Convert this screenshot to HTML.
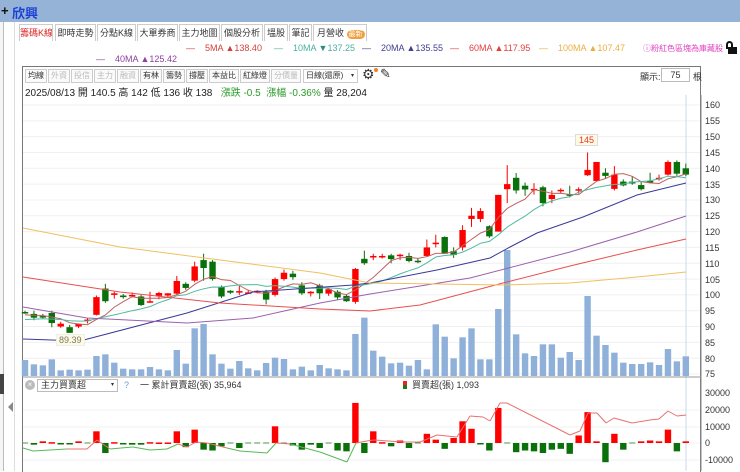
<!DOCTYPE html>
<html><head><meta charset="utf-8">
<style>
*{margin:0;padding:0;box-sizing:border-box}
body{width:740px;height:471px;overflow:hidden;background:#fff;font-family:"Liberation Sans","Noto Sans CJK TC",sans-serif;position:relative;font-size:11px;color:#333}
.a{position:absolute;white-space:nowrap}
.title{left:0;top:0;width:740px;height:22px;background:#95b3d7}
.tab{position:absolute;top:24px;height:17px;border:1px solid #ccc;border-bottom:none;font-size:9px;line-height:16px;text-align:center;color:#333;background:#fff;white-space:nowrap;overflow:hidden}
.tb{position:absolute;top:69px;height:14px;border:1px solid #ccc;font-size:8px;line-height:12px;padding:0 2px;color:#333;background:#fafafa;white-space:nowrap;overflow:hidden}
.g{color:#bbb}
.ax{position:absolute;left:705px;font-size:9px;color:#333}
</style></head><body>
<div class="a title"></div>
<div class="a" style="left:1px;top:3px;font-size:13px;font-weight:bold;color:#111">+</div>
<div class="a" style="left:12px;top:3px;font-size:13px;color:#1b3fd6;font-weight:bold">欣興</div>
<div class="a" style="left:0;top:22px;width:4px;height:449px;border-right:1px solid #bbb;background:#f5f5f5"></div>
<div class="a" style="left:0;top:374px;width:4px;height:20px;background:#444"></div>
<div class="a" style="left:14px;top:22px;width:1px;height:449px;background:#ddd"></div>
<div class="a" style="left:8px;top:402px;width:0;height:0;border-top:5px solid transparent;border-bottom:5px solid transparent;border-right:5px solid #888"></div>
<div class="tab" style="left:19px;width:34px;color:#d22">籌碼K線</div>
<div class="tab" style="left:55px;width:41px">即時走勢</div>
<div class="tab" style="left:97px;width:39px">分點K線</div>
<div class="tab" style="left:137px;width:41px">大單券商</div>
<div class="tab" style="left:179px;width:41px">主力地圖</div>
<div class="tab" style="left:221px;width:42px">個股分析</div>
<div class="tab" style="left:264px;width:24px">塭股</div>
<div class="tab" style="left:289px;width:23px">筆記</div>
<div class="tab" style="left:313px;width:54px;text-align:left;padding-left:3px">月營收 <span style="background:#f0a040;color:#fff;border-radius:6px;font-size:7px;padding:0 2px;line-height:9px;display:inline-block">最新</span></div>
<div class="a" style="left:186px;top:43px;font-size:9px;color:#d04040">—&nbsp;&nbsp;&nbsp; 5MA ▲138.40</div>
<div class="a" style="left:274px;top:43px;font-size:9px;color:#4bb0a0">—&nbsp;&nbsp;&nbsp; 10MA <span style="color:#2a8a80">▼</span>137.25</div>
<div class="a" style="left:362px;top:43px;font-size:9px;color:#404090">—&nbsp;&nbsp;&nbsp; 20MA ▲135.55</div>
<div class="a" style="left:450px;top:43px;font-size:9px;color:#e04040">—&nbsp;&nbsp;&nbsp; 60MA ▲117.95</div>
<div class="a" style="left:539px;top:43px;font-size:9px;color:#e8b040">—&nbsp;&nbsp;&nbsp; 100MA ▲107.47</div>
<div class="a" style="left:643px;top:43px;font-size:8px;color:#e040c0">ⓘ粉紅色區塊為庫藏股</div>
<div class="a" style="left:728px;top:47px;width:9px;height:7px;background:#111"></div>
<div class="a" style="left:726px;top:41px;width:7px;height:8px;border:2px solid #111;border-bottom:none;border-radius:4px 4px 0 0"></div>
<div class="a" style="left:96px;top:54px;font-size:9px;color:#9040a0">—&nbsp;&nbsp;&nbsp; 40MA ▲125.42</div>
<div class="a" style="left:22px;top:66px;width:679px;height:406px;border:1px solid #777;border-bottom:none"></div>
<div class="tb" style="left:25px">均線</div>
<div class="tb g" style="left:48px">外資</div>
<div class="tb g" style="left:71px">投信</div>
<div class="tb g" style="left:94px">主力</div>
<div class="tb g" style="left:117px">融資</div>
<div class="tb" style="left:140px">有林</div>
<div class="tb" style="left:163px">籌勢</div>
<div class="tb" style="left:186px">撐壓</div>
<div class="tb" style="left:209px">本益比</div>
<div class="tb" style="left:240px">紅綠燈</div>
<div class="tb g" style="left:271px">分價量</div>
<div class="tb" style="left:303px;width:55px;background:#fff">日線(還原) <span style="font-size:6px;position:absolute;right:3px">▾</span></div>
<div class="a" style="left:362px;top:66px;font-size:14px;color:#333">⚙</div>
<div class="a" style="left:374px;top:68px;width:4px;height:4px;border-radius:2px;background:#f08020"></div>
<div class="a" style="left:380px;top:66px;font-size:13px;color:#333">✎</div>
<div class="a" style="left:640px;top:70px;font-size:9px">顯示:</div>
<div class="a" style="left:661px;top:68px;width:29px;height:14px;border:1px solid #bbb;font-size:9px;line-height:12px;text-align:center">75</div>
<div class="a" style="left:693px;top:70px;font-size:9px">根</div>
<div class="a" style="left:25px;top:84px;font-size:10px;color:#222">2025/08/13 開 140.5 高 142 低 136 收 138 &nbsp; <span style="color:#2a9a2a">漲跌 -0.5 &nbsp;漲幅 -0.36%</span> 量 28,204</div>
<div class="ax" style="top:100px">160</div><div class="ax" style="top:116px">155</div><div class="ax" style="top:132px">150</div><div class="ax" style="top:148px">145</div><div class="ax" style="top:164px">140</div><div class="ax" style="top:180px">135</div><div class="ax" style="top:195px">130</div><div class="ax" style="top:211px">125</div><div class="ax" style="top:227px">120</div><div class="ax" style="top:243px">115</div><div class="ax" style="top:259px">110</div><div class="ax" style="top:275px">105</div><div class="ax" style="top:290px">100</div><div class="ax" style="top:306px">95</div><div class="ax" style="top:322px">90</div><div class="ax" style="top:338px">85</div><div class="ax" style="top:354px">80</div><div class="ax" style="top:369px">75</div>
<div class="ax" style="top:388px">30000</div><div class="ax" style="top:405px">20000</div><div class="ax" style="top:422px">10000</div><div class="ax" style="top:438px">0</div><div class="ax" style="top:455px">-10000</div>
<div class="a" style="left:25px;top:380px;width:10px;height:10px;border-radius:5px;background:#bbb;color:#fff;font-size:8px;line-height:10px;text-align:center">×</div>
<div class="a" style="left:37px;top:379px;width:81px;height:13px;border:1px solid #bbb;font-size:9px;line-height:11px;padding-left:3px">主力買賣超<span style="position:absolute;right:3px;font-size:6px">▾</span></div>
<div class="a" style="left:124px;top:380px;font-size:9px;color:#6aa0d0">?</div>
<div class="a" style="left:140px;top:378px;font-size:9px;color:#333">一 累計買賣超(張) 35,964</div>
<div class="a" style="left:403px;top:378px;font-size:9px;color:#333"><span style="display:inline-block;width:4px;height:8px;background:linear-gradient(#e22 50%,#1a7a1a 50%);vertical-align:-1px"></span>&nbsp; 買賣超(張) 1,093</div>
<svg id="s" class="a" style="left:0;top:0" width="740" height="471"></svg>
<div class="a" style="left:56px;top:334px;font-size:9px;color:#777;background:#fffbe0;border:1px solid #eee;padding:0 2px">89.39</div>
<div class="a" style="left:575px;top:134px;font-size:9px;color:#e33;background:#fffbe0;border:1px solid #ddd;padding:0 3px">145</div>
<script>
var S=document.getElementById('s'),h='';
function Y(p){return 105+(160-p)*3.165}
function X(i){return 25+(i-1)*8.93}
function L(x1,y1,x2,y2,c,w){h+='<line x1="'+x1+'" y1="'+y1+'" x2="'+x2+'" y2="'+y2+'" stroke="'+c+'" stroke-width="'+(w||1)+'"/>'}
function R(x,y,w,hh,c){h+='<rect x="'+x+'" y="'+y+'" width="'+w+'" height="'+Math.max(hh,1)+'" fill="'+c+'"/>'}
function P(pts,c){h+='<polyline fill="none" stroke="'+c+'" stroke-width="1" points="'+pts.map(function(p){return p.join(',')}).join(' ')+'"/>'}
for(var p=75;p<=160;p+=5){L(23,Y(p),700,Y(p),'#f0f0f0')}
[410,427,443,460].forEach(function(y){L(23,y,700,y,'#f0f0f0')});
L(701,95,701,471,'#888');
L(686,95,686,471,'#c8d8ec');
L(22,377,701,377,'#999');
var vt=[780,793,796,778,811,809,811,809,768,763,788,806,808,808,801,808,811,750,791,685,672,763,791,806,783,805,811,789,773,777,808,800,811,795,805,808,811,702,653,752,770,790,788,797,780,808,673,710,775,712,685,778,778,627,450,703,760,768,733,733,773,756,780,588,707,735,758,788,792,792,787,795,747,784,769];
for(var i=0;i<75;i++){var t=100+vt[i]/3;R(X(i+1)-3.2,t,6.4,376-t,'#8fb0d8')}
var C=[[94.6,94.4,95,94],[94,92.8,95,92],[93.3,93.2,94,92.5],[94.3,91.1,95,89.8],[90,90.9,91.5,89.6],[89.8,88,90.5,89.39],[90,90.8,91,89.5],[92,92.2,92.6,91],[93.7,99.3,99.8,93.5],[102,98,103.5,97.5],[100,100.5,101,98.8],[99.8,99.3,100.3,98.8],[100,100,100.8,99.3],[99.5,96.8,100,96.5],[98,98,101,97.5],[99.7,100.6,101,98.6],[99.8,100.5,100.6,99.2],[100.4,104.4,106,100],[103.5,102.2,104,101.6],[104.5,109,110.5,104],[111,108.5,113,104.5],[110.5,105,111,104.5],[102.5,99.5,103,99],[101.3,100.7,101.5,100.3],[101.2,101.2,102.8,100],[100.8,100.8,101.6,100.4],[100.8,101.3,101.5,100.5],[101,98.5,101.6,97],[100,105,105.5,99.5],[105,107,108,104.5],[106.7,105.6,107.6,104.8],[103,100.5,104,100],[100.5,101,101.2,99.5],[103,100.5,103.5,98.7],[100.4,101.8,102,99.7],[101,99.2,101.5,98.5],[99.7,98,100,97.8],[97.8,108.2,108.5,97.2],[111.4,110,114,109.5],[112.1,112.3,113,111],[112.3,112.3,113,111.5],[112.5,111.3,113,110],[112.3,112.7,113,111],[112.3,110.7,113.3,110.3],[110.8,110.6,111.5,110],[112.3,115,117.5,112],[116.5,116.5,119,115],[118.3,113,118.5,113],[113.8,112.6,115,111.7],[115,120.5,122,114],[124,125,127.5,121.5],[124,126.5,127.4,123],[121.7,118.5,122,118],[120,131.6,131.6,120],[133.4,135,141,129],[137,133,138.5,132],[134.5,133.3,135.5,131.3],[133.5,133.5,135.3,131.7],[134,129,134.5,128],[130.3,131.6,133,129],[133,133.2,133.7,132],[131.8,131.3,134.5,130.8],[133,133.4,134,132],[137.8,139.5,145,137.6],[136,142,142,136],[138.6,137.6,140,136.8],[133.5,138,140.7,133],[135.8,134.6,136.5,134.3],[135.8,135.2,137.5,134.8],[134.7,133.4,136,133],[136,135.8,138.6,135.3],[136.6,137,138,136.1],[138,142,142.5,137.7],[142,138.3,142.5,137.6],[140,138,141.5,137.5]];
var cl=C.map(function(c){return c[1]});
C.forEach(function(c,k){var x=X(k+1),up=c[1]>=c[0],col=up?'#f00':'#0a700a';L(x,Y(c[2]),x,Y(c[3]),col);var t=Y(Math.max(c[0],c[1])),b=Y(Math.min(c[0],c[1]));R(x-3.2,t,6.4,Math.max(b-t,1.5),col)});
function MA(n,pre){var pts=[];for(var i=0;i<75;i++){var s=0;for(var j=i-n+1;j<=i;j++)s+=(j<0?pre:cl[j]);pts.push([X(i+1).toFixed(1),Y(s/n).toFixed(1)])}return pts}
P(MA(5,93.5),'#c06060');
P(MA(10,92),'#50b8a0');
P([[23,339],[80,341],[187,313],[253,292],[353,285],[370,283],[437,270],[490,258],[510,247],[537,233],[583,217],[637,195],[686,183]],'#3a3a9a');
P([[23,307],[87,318],[187,323],[253,318],[320,303],[370,294],[470,278],[570,252],[637,232],[686,216]],'#9a60b0');
P([[23,277],[120,292],[220,303],[320,309],[370,311],[420,305],[503,283],[570,266],[637,250],[686,239]],'#e85050');
P([[23,228],[120,247],[220,260],[320,273],[370,283],[503,285],[570,283],[637,277],[686,272]],'#f0c060');
var V=[0,-1000,1000,500,-500,-500,1000,0,7000,-6000,500,-300,-1000,-1000,500,300,300,7000,-2500,8000,-4000,-4500,-2000,0,-3000,0,0,0,10000,0,-1500,-4000,-1000,-3000,0,-4500,-5000,24000,-6000,7000,500,-2000,1500,-3000,0,5500,2000,-3500,3000,13000,8500,-500,-4500,21000,0,-5500,-4500,-5000,-6000,-4000,-3500,-6500,4500,18500,1000,-11500,5500,-4000,0,1000,1500,1000,8000,-5000,1000];
V.forEach(function(v,k){var x=X(k+1),hh=Math.abs(v)/10000*16.7;if(v==0){L(x-3,443,x+3,443,'#4a9a4a');return}R(x-3.2,v>0?443-hh:443,6.4,Math.max(hh,1.5),v>0?'#f00':'#0a700a')});
var LP=[[23,448],[33,451],[67,449],[87,449],[97,440],[110,449],[133,447],[150,450],[167,449],[178,444],[187,447],[196,442],[207,443],[227,448],[240,451],[267,453],[276,443],[290,444],[320,452],[347,462],[356,443],[367,441],[374,440],[403,442],[420,442],[437,435],[457,437],[470,416],[483,417],[490,421],[500,403],[507,403],[570,435],[580,431],[588,413],[597,413],[606,423],[614,418],[632,423],[650,420],[659,419],[668,411],[677,416],[686,415]];
for(var i=0;i<LP.length-1;i++){var a=LP[i],b=LP[i+1];var g=(a[0]<40)||(a[0]>=110&&a[0]<178)||(a[0]>=227&&a[0]<276)||(a[0]>=290&&a[0]<356);L(a[0],a[1],b[0],b[1],g?'#5ab85a':'#e87070')}
S.innerHTML=h;
</script>
</body></html>
